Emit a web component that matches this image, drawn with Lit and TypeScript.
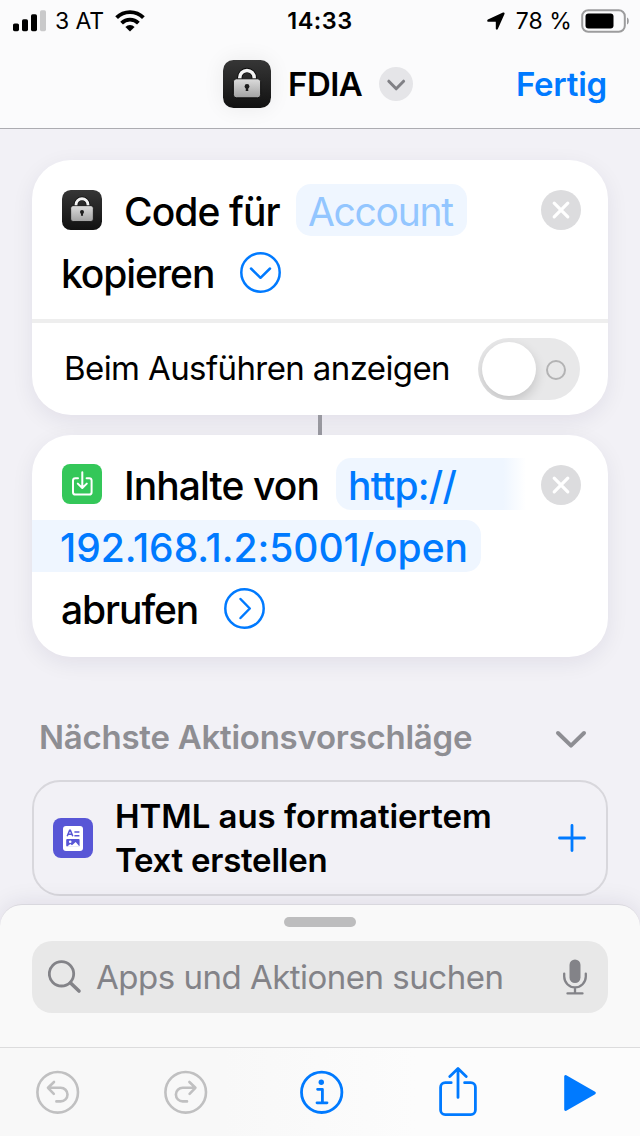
import { LitElement, html, css, svg } from "lit";
import { customElement, property } from "lit/decorators.js";

@customElement("lock-icon")
class LockIcon extends LitElement {
  static styles = css`
    :host { display: block; flex: none; }
    svg { display: block; width: 100%; height: 100%; }
  `;
  render() {
    return html`<svg viewBox="0 0 48 48">
      <defs>
        <linearGradient id="bg" x1="0" y1="0" x2="0" y2="1">
          <stop offset="0" stop-color="#363636" /><stop offset="1" stop-color="#111" />
        </linearGradient>
        <linearGradient id="body" x1="0" y1="0" x2="0" y2="1">
          <stop offset="0" stop-color="#dcdcdc" /><stop offset="1" stop-color="#a2a2a2" />
        </linearGradient>
      </defs>
      <rect width="48" height="48" rx="10.5" fill="url(#bg)" />
      <path d="M16.800 20v-2.400a7.200 7.200 0 0 1 14.400 0V20" fill="none" stroke="#0a0a0a" stroke-width="5.200" />
      <path d="M16.800 20v-2.400a7.200 7.200 0 0 1 14.400 0V20" fill="none" stroke="#f4f4f4" stroke-width="3.500" />
      <rect x="10.400" y="18.800" width="27.200" height="19" rx="3" fill="url(#body)" stroke="#0a0a0a" stroke-width=".9" />
      <circle cx="24" cy="26.400" r="2.400" fill="#1c1c1c" />
      <path d="M23 27h2l.3 4h-2.600z" fill="#1c1c1c" />
    </svg>`;
  }
}

@customElement("clear-button")
class ClearButton extends LitElement {
  static styles = css`
    :host { display: block; flex: none; width: 40px; height: 40px; }
    svg { display: block; }
  `;
  render() {
    return html`<svg width="40" height="40" viewBox="0 0 40 40">
      <circle cx="20" cy="20" r="20" fill="#dcdcde" />
      <path d="M13.200 13.200l13.600 13.600M26.800 13.200L13.200 26.800" stroke="#fff" stroke-width="3.200" stroke-linecap="round" />
    </svg>`;
  }
}

@customElement("disclosure-button")
class DisclosureButton extends LitElement {
  @property() direction = "down";
  static styles = css`
    :host { display: block; flex: none; width: 42px; height: 42px; }
    svg { display: block; }
  `;
  render() {
    const d = this.direction === "down" ? "M11.500 17l9.500 9.300 9.500-9.300" : "M17 11.500l9.300 9.500-9.300 9.500";
    return html`<svg width="42" height="42" viewBox="-0.5 -0.5 42 42" fill="none" stroke="#007aff"
      stroke-width="2.500" stroke-linecap="round" stroke-linejoin="round">
      <circle cx="21" cy="21" r="19.200" /><path d=${d} />
    </svg>`;
  }
}

@customElement("status-bar")
class StatusBar extends LitElement {
  static styles = css`
    :host { display: grid; grid-template-columns: 1fr auto 1fr; height: 40px; align-items: center; font-size: 23px; line-height: 40px; }
    svg { display: block; flex: none; }
    .left { display: flex; align-items: center; padding-left: 13px; }
    .carrier { margin: 1px 0 0 9px; width: 52px; letter-spacing: -0.1px; white-space: nowrap; }
    .wifi { margin-left: 8px; }
    .time { font-weight: 600; font-size: 23.5px; letter-spacing: 0.5px; }
    .right { display: flex; align-items: center; justify-content: flex-end; padding-right: 10px; }
    .percent { margin: 1px 9px 0 11px; letter-spacing: 0.1px; white-space: nowrap; }
  `;
  render() {
    return html`
      <div class="left">
        <svg width="33" height="22" viewBox="0 0 33 22">
          <rect y="13.400" width="6" height="7.800" rx="1.600" /><rect x="9" y="9.200" width="6" height="12" rx="1.600" />
          <rect x="18" y="4.200" width="6" height="17" rx="1.600" /><rect x="27" y=".2" width="6" height="21" rx="1.600" fill="#c9c9ca" />
        </svg>
        <span class="carrier">3 AT</span>
        <svg class="wifi" width="30" height="22" viewBox="0 0 30 22" fill="none" stroke="#000" stroke-width="3.900">
          <path d="M1.600 7.700a19 19 0 0 1 26.800 0" /><path d="M6.600 13.100a12 12 0 0 1 16.800 0" />
          <path d="M15 21.600l-4.600-4.700a6.500 6.500 0 0 1 9.200 0z" fill="#000" stroke="none" />
        </svg>
      </div>
      <div class="time">14:33</div>
      <div class="right">
        <svg width="18" height="18" viewBox="0 0 18 18">
          <path d="M17.200.7c.4.3.5.7.3 1.200L10.800 17c-.5 1-2 .8-2-.4V10.200c0-.3-.1-.4-.4-.4H1.400C.1 9.800-.2 8.200.9 7.600L16 .5c.5-.2.9-.1 1.200.2z" />
        </svg>
        <span class="percent">78 %</span>
        <svg width="49" height="24" viewBox="0 0 49 24">
          <rect x="1.200" y="1.200" width="42.600" height="21.600" rx="6" fill="none" stroke="#9c9c9d" stroke-width="2" />
          <rect x="4.500" y="4.500" width="28" height="15" rx="3" />
          <path d="M46 8.500c2.400.8 2.400 6.200 0 7z" fill="#9c9c9d" />
        </svg>
      </div>`;
  }
}

@customElement("nav-header")
class NavHeader extends LitElement {
  static styles = css`
    :host { display: flex; align-items: center; height: 88px; box-sizing: border-box; padding-left: 223px; padding-right: 33px; font-weight: 600; font-size: 33px; line-height: 88px; }
    lock-icon { width: 48px; height: 48px; border-radius: 11px; box-shadow: 0 0 22px rgba(0, 0, 0, 0.07); }
    .title { margin-left: 17px; width: 74px; letter-spacing: -0.5px; white-space: nowrap; }
    .more { margin-left: 17px; display: block; }
    .done { margin-left: auto; color: #007aff; letter-spacing: -0.25px; white-space: nowrap; }
  `;
  render() {
    return html`<lock-icon></lock-icon>
      <span class="title">FDIA</span>
      <svg class="more" width="34" height="34" viewBox="0 0 34 34">
        <circle cx="17" cy="17" r="17" fill="#e5e5e8" />
        <path d="M9.800 14.200l7.400 7.600 7.400-7.600" fill="none" stroke="#808085" stroke-width="3" stroke-linecap="round" stroke-linejoin="round" />
      </svg>
      <span class="done">Fertig</span>`;
  }
}

@customElement("bottom-toolbar")
class BottomToolbar extends LitElement {
  static styles = css`
    :host { display: grid; grid-template-columns: 128px 136px 139px 125px 32px; align-items: center; height: 89px; box-sizing: border-box; border-top: 1px solid #dcdcdd; padding-left: 36px; background: linear-gradient(90deg, #f8f8f8, #f8f8f8 35%, #fcfcfc 65%); }
    svg { display: block; fill: none; stroke: #007aff; stroke-linecap: round; stroke-linejoin: round; stroke-width: 2.8; }
    .off { stroke: #c0c0c1; stroke-width: 2.6; }
    .play { fill: #007aff; margin-top: 2px; }
  `;
  render() {
    const turn = svg`<path d="M12.200 17.800H24.700a6.800 6.800 0 0 1 0 13.600H20.400M18 12l-6 5.800 5.800 6" />`;
    return html`
      <svg class="off" width="44" height="44" viewBox="0 0 44 44"><circle cx="21.700" cy="22.300" r="20.300" />${turn}</svg>
      <svg class="off" width="44" height="44" viewBox="0 0 44 44"><circle cx="21.700" cy="22.300" r="20.300" /><g transform="translate(43.400 0) scale(-1 1)">${turn}</g></svg>
      <svg width="44" height="44" viewBox="0 0 44 44"><circle cx="21.700" cy="22.300" r="20.200" />
        <circle cx="21.300" cy="12.300" r="2.700" fill="#007aff" stroke="none" /><path d="M17.600 19.300h4.800v13M17 32.800h10" /></svg>
      <svg width="38" height="50" viewBox="0 0 38 50"><path d="M12.200 15.700H6.200a4.600 4.600 0 0 0-4.600 4.600V43a4.600 4.600 0 0 0 4.600 4.600H31.800A4.600 4.600 0 0 0 36.400 43V20.300a4.600 4.600 0 0 0-4.600-4.600H25.600M19 30.400V2M10.800 9.600L19 1.600l8.200 8" /></svg>
      <svg class="play" width="32" height="38" viewBox="0 0 32 38"><path d="M1.600 2.400v33.200L30.400 19z" /></svg>`;
  }
}

@customElement("app-root")
class AppRoot extends LitElement {
  static styles = css`
    :host { display: flex; flex-direction: column; width: 640px; height: 1136px; overflow: hidden; background: #f2f1f6; color: #000; font-family: Inter, "Liberation Sans", sans-serif; }
    svg { display: block; flex: none; }
    .top { flex: none; background: #fbfbfc; border-bottom: 1px solid #acacb1; }
    .content { flex: 1; min-height: 0; padding: 31px 32px 0; display: flex; flex-direction: column; overflow: hidden; }
    .card { flex: none; background: #fff; border-radius: 39px; box-shadow: 0 6px 22px rgba(30, 20, 70, 0.075); font-size: 39px; font-weight: 500; }
    .first { padding-top: 19px; height: 236px; }
    .second { padding: 18px 0; height: 186px; }
    .line { display: flex; align-items: center; height: 62px; line-height: 60px; padding: 0 27px 0 29px; white-space: nowrap; }
    .glyph { width: 40px; height: 40px; margin: 0 22px 0 1px; }
    .pill { display: block; height: 52px; line-height: 55px; border-radius: 15px; background: #eff6ff; color: #007aff; box-sizing: border-box; }
    .line clear-button { margin-left: auto; }
    .code, .copy, .contents, .fetch { margin-top: 3px; }
    .code { width: 172px; letter-spacing: -0.9px; }
    .account { width: 171px; padding-left: 12px; color: #93c6ff; font-weight: 400; letter-spacing: -1.3px; }
    .copy { width: 178px; letter-spacing: -1.1px; }
    .show { display: flex; align-items: center; height: 92px; margin-top: 16px; border-top: 4px solid #eee; padding: 0 28px 0 32px; font-size: 33px; font-weight: 400; line-height: 90px; white-space: nowrap; }
    .show-label { letter-spacing: -0.6px; margin: -2px auto 0 0; }
    .switch { display: flex; align-items: center; justify-content: space-between; width: 102px; height: 62px; box-sizing: border-box; padding: 0 14px 0 4px; border-radius: 31px; background: #e8e8e9; overflow: hidden; }
    .knob { width: 54px; height: 54px; border-radius: 50%; background: #fff; box-shadow: 0 5px 12px rgba(0, 0, 0, 0.16); }
    .ring { width: 20px; height: 20px; margin-top: 2px; box-sizing: border-box; border: 2px solid #b3b3b4; border-radius: 50%; }
    .connector { flex: none; align-self: center; width: 4px; height: 20px; background: #9999a0; }
    .contents { width: 212px; letter-spacing: -0.9px; }
    .second clear-button { margin-top: 2px; }
    .scheme { width: 190px; padding-left: 12px; border-radius: 15px 0 0 15px; background: linear-gradient(90deg, #eff6ff 88%, #fff); letter-spacing: -0.8px; }
    .address { padding-left: 0; }
    .host { width: 449px; padding-left: 28px; border-radius: 0 15px 15px 0; letter-spacing: -0.05px; }
    .fetch { width: 162px; letter-spacing: -1.1px; }
    .heading { flex: none; display: flex; align-items: center; justify-content: space-between; height: 44px; margin-top: 58px; padding: 0 21px 0 7px; color: #8e8e93; font-size: 33px; font-weight: 600; white-space: nowrap; }
    .heading-text { letter-spacing: -0.25px; }
    .heading-icon { margin-top: 4px; }
    .suggest { flex: none; display: flex; align-items: center; height: 116px; box-sizing: border-box; margin-top: 21px; padding: 0 20px 0 19px; border: 2px solid #d8d7dc; border-radius: 28px; font-size: 33px; font-weight: 600; line-height: 44px; }
    .suggest-text { margin: 0 auto 0 22px; white-space: nowrap; }
    .row { display: block; }
    .html-row { letter-spacing: -0.05px; }
    .text-row { letter-spacing: -0.25px; }
    .sheet { flex: none; position: relative; height: 143px; box-sizing: border-box; margin-top: -23px; padding: 12px 32px 0; border-top: 1px solid #d9d8de; border-radius: 22px 22px 0 0; background: #f9f9f9; box-shadow: 0 0 24px rgba(30, 20, 70, 0.1); }
    .grabber { width: 72px; height: 10px; margin: 0 auto 14px; border-radius: 5px; background: #bdbdbe; }
    .search { display: flex; align-items: center; height: 72px; box-sizing: border-box; padding: 0 20px 0 16px; border-radius: 20px; background: #e8e8e8; color: #838388; font-size: 33px; white-space: nowrap; }
    .placeholder { margin: 0 auto 0 14px; letter-spacing: -0.5px; }
    bottom-toolbar { flex: none; position: relative; }
  `;
  render() {
    return html`
      <div class="top"><status-bar></status-bar><nav-header></nav-header></div>
      <div class="content">
        <div class="card first">
          <div class="line"><lock-icon class="glyph"></lock-icon><span class="code">Code für</span><span class="pill account">Account</span><clear-button></clear-button></div>
          <div class="line"><span class="copy">kopieren</span><disclosure-button direction="down"></disclosure-button></div>
          <div class="show"><span class="show-label">Beim Ausführen anzeigen</span><div class="switch"><div class="knob"></div><div class="ring"></div></div></div>
        </div>
        <div class="connector"></div>
        <div class="card second">
          <div class="line">
            <svg class="glyph" viewBox="0 0 40 40" fill="none" stroke="#fff" stroke-width="2" stroke-linecap="round" stroke-linejoin="round">
              <rect width="40" height="40" rx="8" fill="#34c759" stroke="none" />
              <path d="M16 14.200h-2.600a2.400 2.400 0 0 0-2.400 2.400v11.600a2.400 2.400 0 0 0 2.400 2.400h13.800a2.400 2.400 0 0 0 2.400-2.400V16.600a2.400 2.400 0 0 0-2.400-2.400H24.600M20.300 8.200v15.600M15.800 19.600l4.500 4.400 4.500-4.400" />
            </svg>
            <span class="contents">Inhalte von</span><span class="pill scheme">http://</span><clear-button></clear-button>
          </div>
          <div class="line address"><span class="pill host">192.168.1.2:5001/open</span></div>
          <div class="line"><span class="fetch">abrufen</span><disclosure-button direction="right"></disclosure-button></div>
        </div>
        <div class="heading"><span class="heading-text">Nächste Aktionsvorschläge</span>
          <svg class="heading-icon" width="32" height="20" viewBox="0 0 32 20"><path d="M3 4l13 12.600L29 4" fill="none" stroke="#8e8e93" stroke-width="4" stroke-linecap="round" stroke-linejoin="round" /></svg>
        </div>
        <div class="suggest">
          <svg width="40" height="40" viewBox="0 0 40 40">
            <rect width="40" height="40" rx="8" fill="#5856d6" /><rect x="10" y="8" width="20" height="25" rx="3" fill="#fff" />
            <path d="M14.200 18.200l2.400-6h.8l2.400 6M15 16.300h4" fill="none" stroke="#5856d6" stroke-width="1.500" />
            <path d="M21.400 14h5M21.400 17.800h5" stroke="#5856d6" stroke-width="1.600" />
            <rect x="13.200" y="21" width="13.400" height="7.600" rx="1" fill="#5856d6" />
            <circle cx="17.200" cy="23.800" r="1.300" fill="#fff" /><path d="M14 28.800l3.200-2.700 1.800 1.100 3.700-3.200 4 4.800z" fill="#fff" />
          </svg>
          <div class="suggest-text"><span class="row html-row">HTML aus formatiertem</span><span class="row text-row">Text erstellen</span></div>
          <svg width="28" height="28" viewBox="0 0 28 28"><path d="M14 1.500v25M1.500 14h25" stroke="#007aff" stroke-width="2.800" stroke-linecap="round" /></svg>
        </div>
      </div>
      <div class="sheet">
        <div class="grabber"></div>
        <div class="search">
          <svg width="34" height="34" viewBox="0 0 34 34" fill="none" stroke="#838388" stroke-linecap="round"><circle cx="13.500" cy="13.800" r="12.200" stroke-width="2.800" /><path d="M22.600 23l8.400 8" stroke-width="3.600" /></svg>
          <span class="placeholder">Apps und Aktionen suchen</span>
          <svg width="26" height="36" viewBox="0 0 26 36" fill="none" stroke="#838388" stroke-width="2.300" stroke-linecap="round"><rect x="7.500" y=".4" width="11" height="23.600" rx="5.500" fill="#838388" stroke="none" /><path d="M2.200 14.600v3a10.800 10.800 0 0 0 21.600 0v-3M13 28.400V34M5.500 34.400h15" /></svg>
        </div>
      </div>
      <bottom-toolbar></bottom-toolbar>`;
  }
}
